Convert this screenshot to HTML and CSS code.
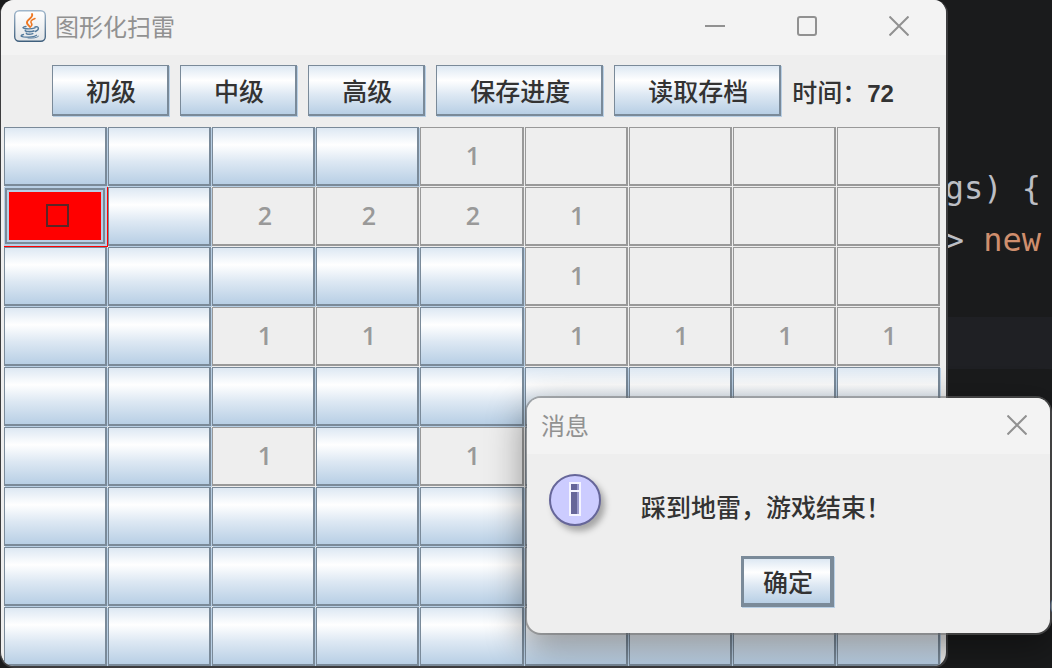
FILE: index.html
```html
<!DOCTYPE html>
<html lang="zh-CN">
<head>
    <meta charset="UTF-8">
    <meta name="viewport" content="width=device-width, initial-scale=1.0">
    <title>图形化扫雷</title>
    <link rel="stylesheet" href="styles.css">
</head>
<body>
    <div class="editor">
        <div class="line"></div>
        <div class="line"></div>
        <div class="line"></div>
        <div class="line">gs) {</div>
        <div class="line">&gt; <span class="keyword">new</span></div>
        <div class="line"></div>
        <div class="line current"></div>
        <div class="line"></div>
        <div class="line"></div>
        <div class="line"></div>
        <div class="line"></div>
        <div class="line long">g</div>
    </div>

    <main class="window game">
        <header class="title-bar">
            <svg class="java-icon" viewBox="0 0 32 32">
                <defs>
                    <linearGradient id="tile" x1="0" y1="0" x2="0" y2="1">
                        <stop offset="0" stop-color="#ffffff"/>
                        <stop offset="1" stop-color="#e2e5e8"/>
                    </linearGradient>
                    <linearGradient id="edge" x1="0" y1="0" x2="0" y2="1">
                        <stop offset="0" stop-color="#9fb6cb"/>
                        <stop offset="1" stop-color="#3f5f7d"/>
                    </linearGradient>
                </defs>
                <rect x="0.7" y="0.7" width="30.6" height="30.6" rx="4.5" fill="url(#tile)" stroke="url(#edge)" stroke-width="1.4"/>
                <g fill="none" stroke="#ee7722" stroke-linecap="round">
                    <path d="M18 4c2 4-6 5-5 9 .3 1.600 1.800 2.500 3 4" stroke-width="1.900"/>
                    <path d="M21 8.500c-4 1.500-5 3-3.500 5 .8 1.200.3 2.200-.7 3" stroke-width="1.500"/>
                </g>
                <g fill="none" stroke="#557b9d" stroke-linecap="round">
                    <path d="M12 16.500c-3 .5-4 1.300-2 1.800 3 .6 8 .5 11-.4" stroke-width="1.300"/>
                    <path d="M21 17c4-1.300 5 2.500.3 4.500" stroke-width="1.400"/>
                    <path d="M11.300 20.300c-.5 1.700 6 1.500 8.500.6" stroke-width="1.600"/>
                    <path d="M12.300 23.200c.5 1.500 4.500 1.200 6.500.4" stroke-width="1.500"/>
                    <path d="M9.500 24.500c-3 .7-3.500 1.800 0 2.300 5 .6 11 .1 13-1.500" stroke-width="1.300"/>
                    <path d="M14 28c4 .4 9-.1 10.500-1.700" stroke-width=".9"/>
                </g>
            </svg>
            <h1 class="title">图形化扫雷</h1>
            <div class="window-controls">
                <button class="control" aria-label="最小化">
                    <svg viewBox="0 0 20 20"><path d="M0 10h20"/></svg>
                </button>
                <button class="control" aria-label="最大化">
                    <svg viewBox="0 0 20 20"><rect x="1" y="1" width="18" height="18" rx="2"/></svg>
                </button>
                <button class="control" aria-label="关闭">
                    <svg viewBox="0 0 20 20"><path d="M.5.5l19 19M19.500.5l-19 19"/></svg>
                </button>
            </div>
        </header>

        <div class="toolbar">
            <button class="metal-btn">初级</button>
            <button class="metal-btn">中级</button>
            <button class="metal-btn">高级</button>
            <button class="metal-btn">保存进度</button>
            <button class="metal-btn">读取存档</button>
            <div class="timer">时间：<span class="seconds">72</span></div>
        </div>

        <div class="board" id="board"></div>
    </main>

    <section class="window dialog" role="dialog" aria-labelledby="dialogTitle">
        <header class="title-bar">
            <h2 class="title" id="dialogTitle">消息</h2>
            <div class="window-controls">
                <button class="control" aria-label="关闭">
                    <svg viewBox="0 0 20 20"><path d="M.5.5l19 19M19.500.5l-19 19"/></svg>
                </button>
            </div>
        </header>
        <div class="message">
            <svg class="info-icon" viewBox="0 0 52 52">
                <circle cx="26" cy="26" r="25" fill="#ccccff" stroke="#666699" stroke-width="2"/>
                <path d="M20 8h12v34H20z" fill="#f4f4ff"/>
                <path d="M22 10h6v6h-6zM22 18h6v22h-6z" fill="#666699"/>
                <path d="M28 10h2v6h-2zM28 18h2v22h-2z" fill="#9999cc"/>
            </svg>
            <p class="message-text">踩到地雷，游戏结束！</p>
        </div>
        <div class="actions">
            <button class="metal-btn default">确定</button>
        </div>
    </section>

    <script src="script.js"></script>
</body>
</html>
```

FILE: styles.css
```css
* {
    margin: 0;
    padding: 0;
    box-sizing: border-box;
}

body {
    height: 100vh;
    overflow: hidden;
    position: relative;
    background: #1a1b1c;
    color: #333;
    font-family: "Liberation Sans", "Noto Sans CJK SC", sans-serif;
    font-size: 25px;
}

button {
    font: inherit;
    color: inherit;
}

/* Редактор кода позади окон */
.editor {
    height: 100%;
    padding-top: 5px;
    overflow: hidden;
    font-family: "DejaVu Sans Mono", monospace;
    font-size: 32px;
    color: #bcbec4;
}

.line {
    height: 52px;
    line-height: 54px;
    padding-right: 11px;
    text-align: right;
    white-space: pre;
}

.line.current {
    background: #1f2024;
}

.line.long {
    padding-right: 0;
    margin-right: -16px;
}

.keyword {
    color: #cf8e6d;
}

.window {
    position: absolute;
    background: #eee;
}

.game {
    top: 0;
    left: 0;
    right: 104px;
    bottom: 2px;
    border: solid #3c3c3e;
    border-width: 0 2px 0 1px;
    border-radius: 14px;
    overflow: hidden;
    box-shadow: 0 2px 0 #3c3c3e;
}

.title-bar {
    display: flex;
    align-items: center;
    height: 55px;
    padding: 0 1px 3px 13px;
    background: #f3f3f3;
}

.java-icon {
    width: 32px;
    height: 32px;
    margin-right: 9px;
}

.title {
    font-family: "Noto Sans CJK SC", sans-serif;
    font-size: 24px;
    font-weight: 400;
    line-height: 32px;
    color: #919191;
}

.window-controls {
    display: flex;
    margin-left: auto;
}

.control {
    display: flex;
    align-items: center;
    justify-content: center;
    width: 92px;
    height: 52px;
    border: none;
    background: none;
}

.control svg {
    width: 20px;
    height: 20px;
    fill: none;
    stroke: #919191;
    stroke-width: 2;
}

.toolbar {
    display: flex;
    justify-content: center;
    align-items: center;
    gap: 11px;
    height: 72px;
    padding-right: 1px;
}

.metal-btn,
.cell {
    border: 1px solid #7a8a99;
    border-width: 1px 2px 2px 1px;
    box-shadow: 1px 1px 0 #b8cfe5;
    background: linear-gradient(#dde8f3, #fff 30%, #dde8f3 60%, #b8cfe5);
}

.metal-btn {
    height: 51px;
    padding: 4px 31px 0 33px;
    margin-bottom: 1px;
    font-weight: 500;
    line-height: 36px;
    white-space: nowrap;
}

.timer {
    font-weight: 500;
    white-space: nowrap;
}

.seconds {
    font-size: 24px;
    font-weight: 700;
}

.board {
    display: grid;
    grid-template-columns: repeat(9, 1fr);
    grid-auto-rows: 60px;
    padding: 0 5px 0 3px;
}

.cell {
    padding: 0 0 3px 3px;
    margin: 0 1px 1px 0;
    font-family: "Open Sans", "Noto Sans", sans-serif;
    font-weight: 600;
    line-height: 36px;
}

.cell:disabled {
    border-color: #999;
    box-shadow: none;
    background: #eee;
    color: #999;
}

.cell.mine {
    display: flex;
    align-items: center;
    justify-content: center;
    margin: 0;
    border: solid #f00;
    border-width: 0 1px 1px 0;
    background: #f00;
    box-shadow: inset 1px 1px 0 #b8cfe5,
        inset -2px -2px 0 #b8cfe5,
        inset 3px 3px 0 #7a8a99,
        inset -4px -4px 0 #7a8a99,
        inset 5px 5px 0 #b8cfe5,
        inset -6px -6px 0 #b8cfe5;
}

.mine-mark {
    width: 23px;
    height: 23px;
    border: 2px solid #5a2626;
}

/* Окно сообщения */
.dialog {
    right: 2px;
    bottom: 35px;
    width: 523px;
    border-radius: 14px;
    box-shadow: 0 0 0 2px rgba(110, 110, 110, 0.5), 0 12px 36px 4px rgba(0, 0, 0, 0.38);
}

.dialog .title-bar {
    height: 56px;
    padding-left: 14px;
    border-radius: 14px 14px 0 0;
}

.dialog .control {
    width: 64px;
}

.message {
    display: flex;
    align-items: center;
    gap: 40px;
    padding: 20px 22px;
}

.info-icon {
    width: 52px;
    height: 52px;
    filter: drop-shadow(4px 5px 3px rgba(0, 0, 0, 0.3));
}

.message-text {
    padding-top: 16px;
    font-weight: 500;
    line-height: 36px;
}

.actions {
    display: flex;
    justify-content: center;
    padding: 10px 2px 25px 0;
}

.metal-btn.default {
    padding: 4px 17px 0 19px;
    border-width: 3px 4px 4px 3px;
}
```

FILE: script.js
```js
// # закрытая клетка, * мина, 0-8 открытая клетка
const rows = [
    '####10000',
    '*#2221000',
    '#####1000',
    '##11#1111',
    '#########',
    '##1#1####',
    '#########',
    '#########',
    '#########'
];

const board = document.getElementById('board');

rows.join('').split('').forEach((value) => {
    const cell = document.createElement('button');
    cell.className = 'cell';

    if (value === '*') {
        const mark = document.createElement('span');
        mark.className = 'mine-mark';
        cell.classList.add('mine');
        cell.appendChild(mark);
    } else if (value !== '#') {
        cell.disabled = true;
        cell.textContent = value === '0' ? '' : value;
    }

    board.appendChild(cell);
});
```
